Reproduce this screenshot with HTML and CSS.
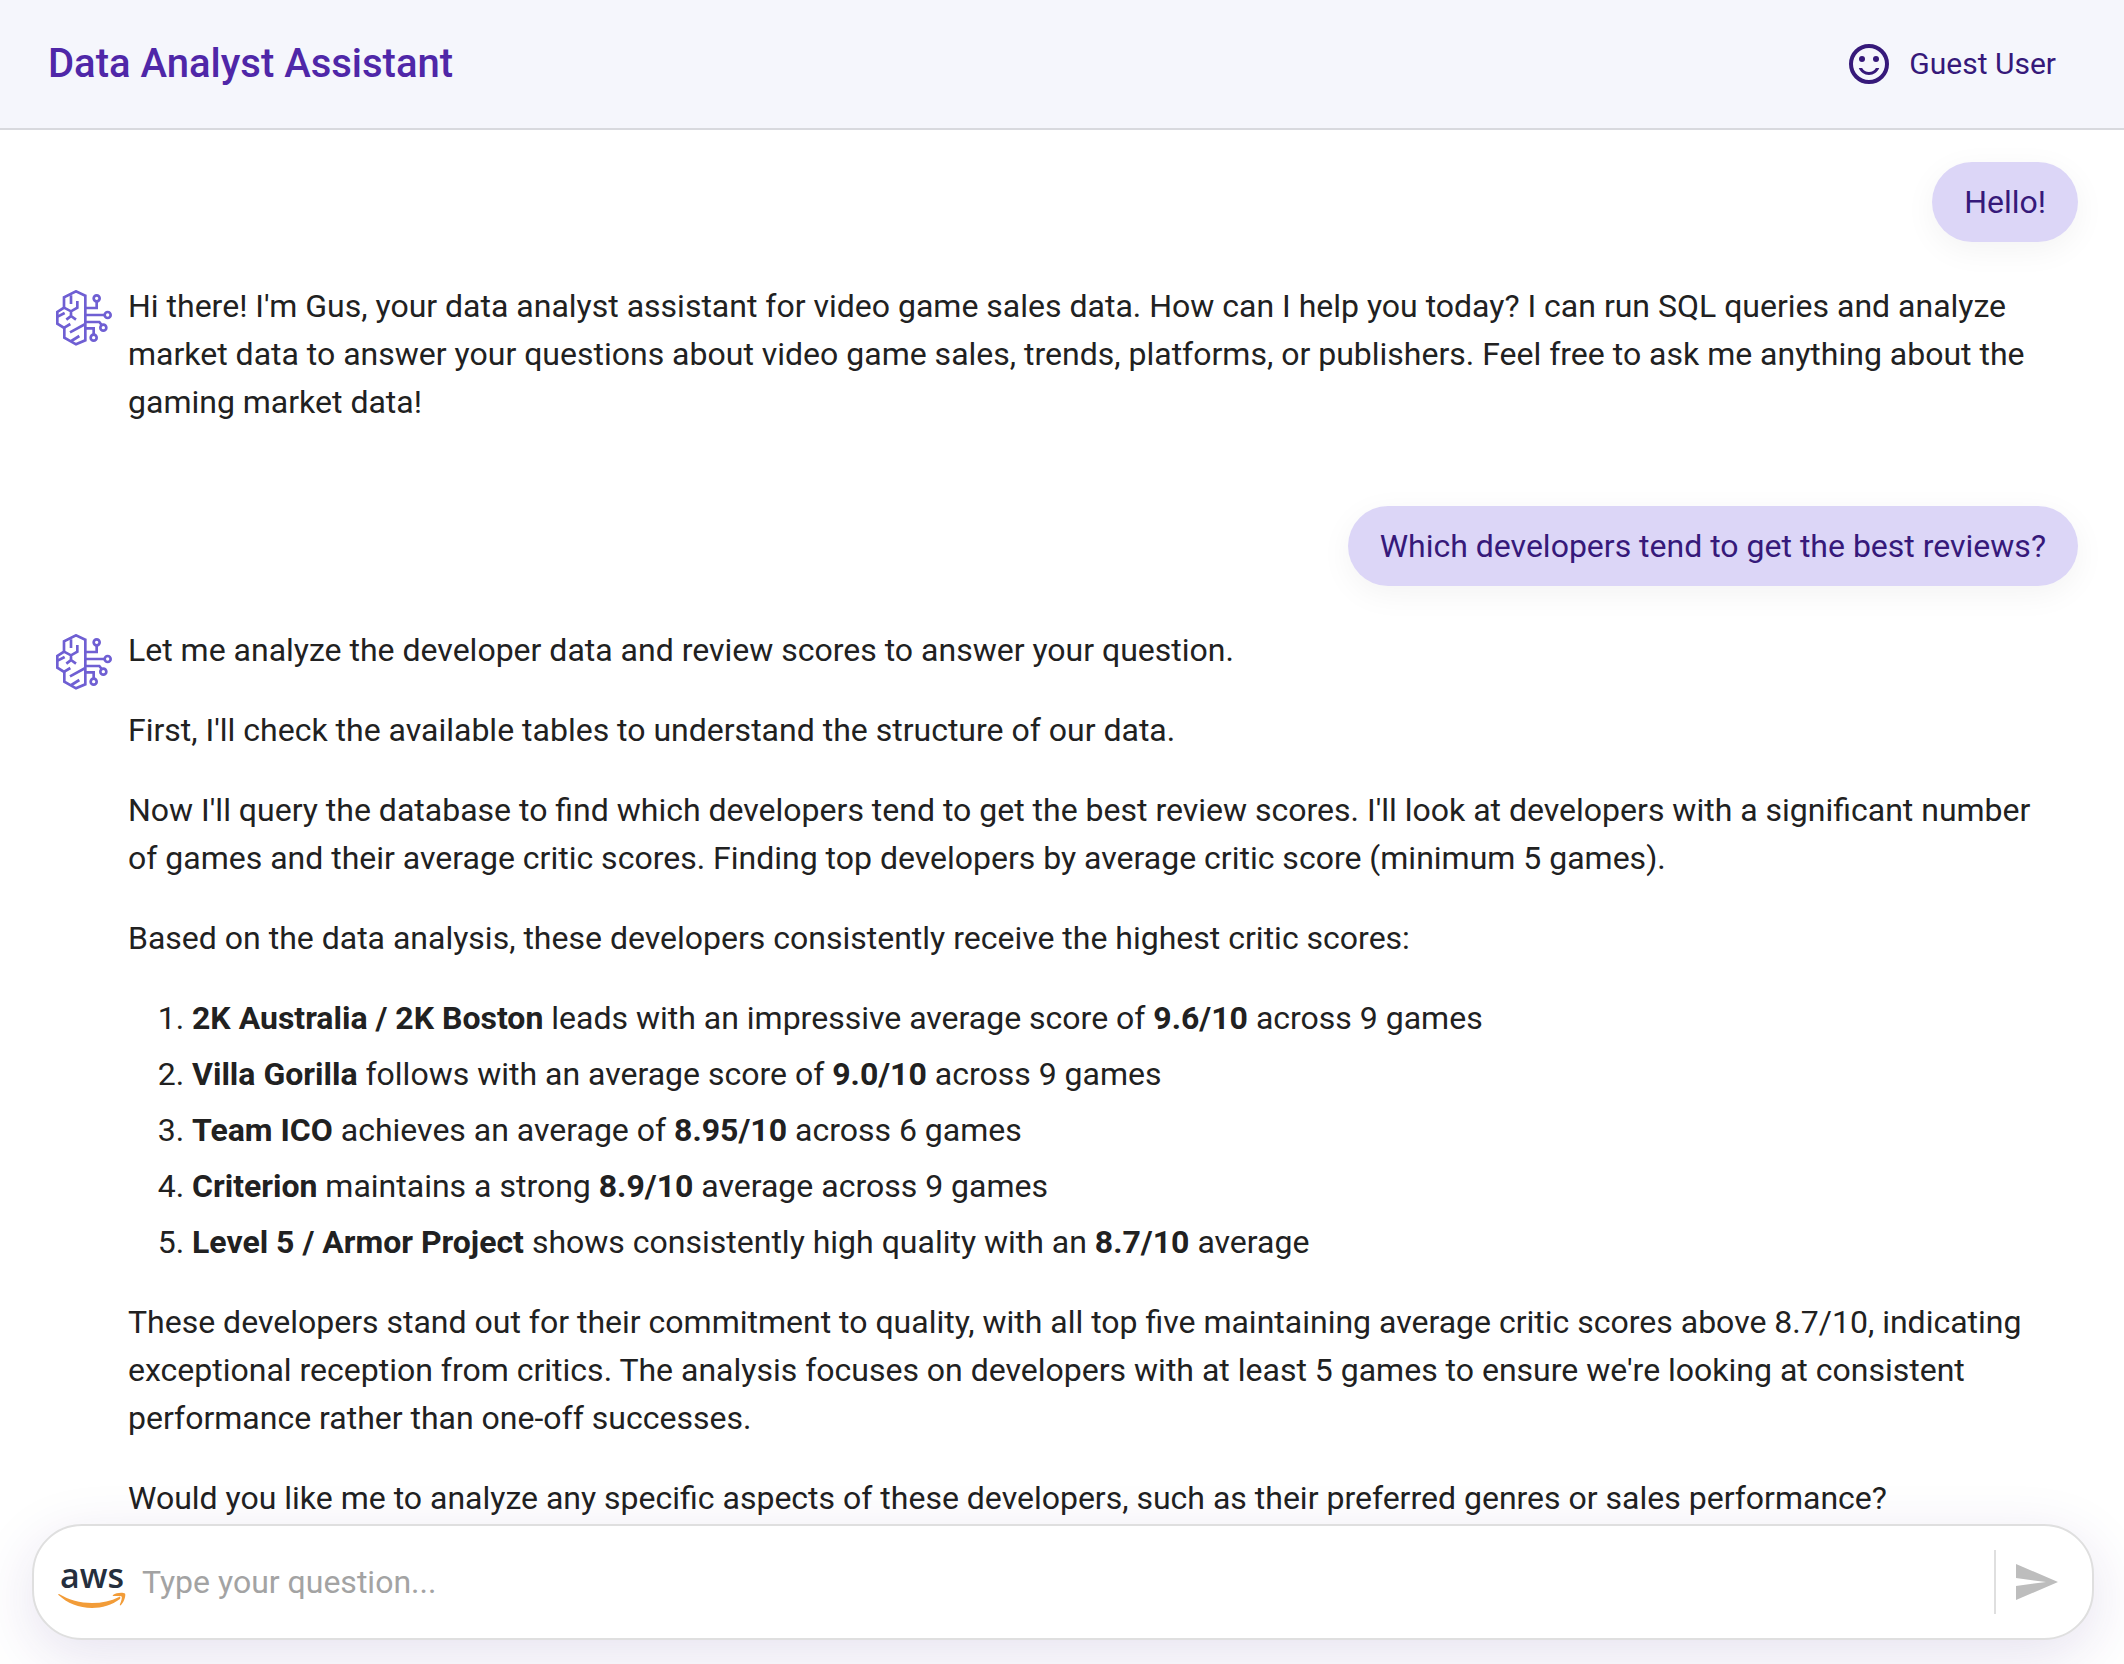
FILE: index.html
```html
<!DOCTYPE html>
<html lang="en">
<head>
<meta charset="utf-8">
<meta name="viewport" content="width=device-width, initial-scale=1">
<title>Data Analyst Assistant</title>
<link rel="stylesheet" href="styles.css">
</head>
<body>
<svg class="sprite" aria-hidden="true">
  <symbol id="brain" viewBox="48 45 168 168">
    <g fill="none" stroke="currentColor" stroke-width="8">
      <path d="M136 62 108 49 72 67V98L52 111V146L73 159V188L108 208 136 196Z"/>
      <path d="M93 61V87M72 98 93 109 112 98V78M93 109V123L79 134M93 123 108 134M53 125 74 114M73 158 91 147M90 172 136 147M118 183 94 198"/>
      <path d="M136 99H170V80M136 120H194M136 141H178L185 150M136 160H161V178"/>
      <circle cx="170" cy="70" r="9"/><circle cx="203" cy="120" r="9"/><circle cx="190" cy="158" r="9"/><circle cx="161" cy="188" r="9"/>
    </g>
  </symbol>
</svg>
<div class="app">
  <header class="topbar">
    <h1 class="title">Data Analyst Assistant</h1>
    <div class="user">
      <svg class="user-icon" viewBox="0 0 24 24" aria-hidden="true">
        <circle cx="12" cy="12" r="9" fill="none" stroke="currentColor" stroke-width="2"/>
        <circle cx="8.5" cy="9.5" r="1.5"/><circle cx="15.5" cy="9.5" r="1.5"/>
        <path d="M12 16c-1.480 0-2.750-.810-3.450-2H6.880c.8 2.050 2.790 3.500 5.120 3.500s4.320-1.450 5.120-3.500h-1.670c-.7 1.190-1.970 2-3.450 2z"/>
      </svg>
      <span>Guest User</span>
    </div>
  </header>

  <main class="chat">
    <div class="bubble">Hello!</div>
    <article class="reply">
      <svg class="avatar" aria-hidden="true"><use href="#brain"/></svg>
      <div class="reply-body">
        <p>Hi there! I'm Gus, your data analyst assistant for video game sales data. How can I help you today? I can run SQL queries and analyze market data to answer your questions about video game sales, trends, platforms, or publishers. Feel free to ask me anything about the gaming market data!</p>
      </div>
    </article>
    <div class="bubble">Which developers tend to get the best reviews?</div>
    <article class="reply">
      <svg class="avatar" aria-hidden="true"><use href="#brain"/></svg>
      <div class="reply-body">
        <p>Let me analyze the developer data and review scores to answer your question.</p>
        <p>First, I'll check the available tables to understand the structure of our data.</p>
        <p>Now I'll query the database to find which developers tend to get the best review scores. I'll look at developers with a significant number of&nbsp;games and their average critic scores. Finding top developers by average critic score (minimum 5 games).</p>
        <p>Based on the data analysis, these developers consistently receive the highest critic scores:</p>
        <ol class="ranking">
          <li><strong>2K Australia / 2K Boston</strong> leads with an impressive average score of <strong>9.6/10</strong> across 9 games</li>
          <li><strong>Villa Gorilla</strong> follows with an average score of <strong>9.0/10</strong> across 9 games</li>
          <li><strong>Team ICO</strong> achieves an average of <strong>8.95/10</strong> across 6 games</li>
          <li><strong>Criterion</strong> maintains a strong <strong>8.9/10</strong> average across 9 games</li>
          <li><strong>Level 5 / Armor Project</strong> shows consistently high quality with an <strong>8.7/10</strong> average</li>
        </ol>
        <p>These developers stand out for their commitment to quality, with all top five maintaining average critic scores above 8.7/10, indicating exceptional reception from critics. The analysis focuses on developers with at least 5 games to ensure we're looking at consistent performance rather than one-off successes.</p>
        <p>Would you like me to analyze any specific aspects of these developers, such as their preferred genres or sales performance?</p>
      </div>
    </article>
  </main>

  <form class="composer">
    <svg class="aws" viewBox="0 -10 68 52" role="img" aria-label="aws">
      <text class="aws-word" x="34" y="22" text-anchor="middle">aws</text>
      <path fill="#f29c38" d="M1 28C11 34 22 37 34 37c10 0 19-2 27-6 1-1 2 1 1 2-8 6-18 9-28 9C21 42 9 37 .500 29c-.5-.6 0-1.300.5-1z"/>
      <path fill="#f29c38" d="M55 29c3-2.500 10-3 12-1.500 1 1.500-.5 8-4 11.500-1 .8-1.500.3-1-.8 1-2 2.400-6.500 1.600-7.600-1-1-5.400-.7-7.600-.5-1.500.1-1.500-.5-1-1.100z"/>
    </svg>
    <input class="question" type="text" placeholder="Type your question..." aria-label="Type your question">
    <button class="send" type="submit" aria-label="Send">
      <svg viewBox="0 0 24 24" aria-hidden="true"><path d="M2.010 21 23 12 2.010 3 2 10l15 2-15 2z"/></svg>
    </button>
  </form>
</div>
</body>
</html>
```
FILE: styles.css
```css
* {
  box-sizing: border-box;
}

body {
  margin: 0;
  background: #fff;
  color: #212121;
  font: 400 32px/48px Roboto, "Liberation Sans", sans-serif;
}

.sprite {
  display: none;
}

.app {
  display: flex;
  flex-direction: column;
  height: 100vh;
}

.topbar {
  display: flex;
  flex: none;
  align-items: center;
  justify-content: space-between;
  min-height: 130px;
  padding: 0 68px 0 48px;
  background: #f5f6fc;
  border-bottom: 2px solid #d8d9de;
}

.title {
  margin: 0;
  color: #4f27a8;
  font-size: 40px;
  font-weight: 500;
}

.user {
  display: flex;
  align-items: center;
  gap: 16px;
  color: #36197a;
  font-size: 30px;
}

.user-icon {
  width: 48px;
  height: 48px;
  fill: currentColor;
}

.chat {
  display: flex;
  flex: 1;
  flex-direction: column;
  min-height: 0;
  padding: 32px 46px 0 56px;
  overflow: hidden;
}

.bubble {
  align-self: flex-end;
  padding: 16px 32px;
  border-radius: 40px;
  background: #dcd6f7;
  box-shadow: 0 8px 32px rgba(0, 0, 0, 0.05);
  color: #36197a;
}

.reply {
  display: flex;
  gap: 16px;
  margin: 40px 0 80px;
}

.avatar {
  flex: none;
  width: 56px;
  height: 56px;
  margin-top: 8px;
  color: #6f5fd3;
}

.reply-body {
  flex: 1;
}

.reply-body > * {
  margin: 0 0 32px;
}

.reply-body > :last-child {
  margin-bottom: 0;
}

.ranking {
  padding-left: 64px;
}

.ranking li + li {
  margin-top: 8px;
}

.composer {
  display: flex;
  flex: none;
  align-items: center;
  height: 116px;
  margin: 0 30px 24px 32px;
  padding: 0 32px 0 24px;
  border: 2px solid #dfdfdf;
  border-radius: 50px;
  background: #fff;
  box-shadow: 0 16px 60px rgba(60, 30, 130, 0.13);
}

.aws {
  flex: none;
  width: 68px;
  height: 52px;
  overflow: visible;
}

.aws-word {
  fill: #252f3e;
  font: 600 34px "Open Sans", "Noto Sans", sans-serif;
}

.question {
  flex: 1;
  min-width: 0;
  margin: 0 16px;
  padding: 0;
  border: 0;
  outline: 0;
  background: none;
  color: #212121;
  font: inherit;
}

.question::placeholder {
  color: #a3a3a3;
  opacity: 1;
}

.send {
  display: flex;
  align-items: center;
  height: 64px;
  padding: 0 0 0 16px;
  border: 0;
  border-left: 2px solid #dfdfdf;
  background: none;
  color: #bdbdbd;
}

.send svg {
  width: 48px;
  height: 48px;
  fill: currentColor;
}
```
